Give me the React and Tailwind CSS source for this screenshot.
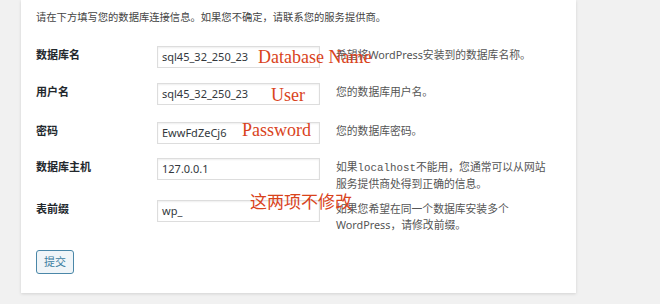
const rows = [
  {
    label: "数据库名",
    value: "sql45_32_250_23",
    rowClass: "h-[37px]",
    desc: <>希望将WordPress安装到的数据库名称。</>,
  },
  {
    label: "用户名",
    value: "sql45_32_250_23",
    rowClass: "h-[39px]",
    desc: <>您的数据库用户名。</>,
  },
  {
    label: "密码",
    value: "EwwFdZeCj6",
    rowClass: "h-[36px]",
    desc: <>您的数据库密码。</>,
  },
  {
    label: "数据库主机",
    value: "127.0.0.1",
    rowClass: "h-[42px]",
    desc: (
      <>
        如果<code className="font-['Liberation_Mono',monospace]">localhost</code>不能用，您通常可以从网站
        <br />
        服务提供商处得到正确的信息。
      </>
    ),
  },
  {
    label: "表前缀",
    value: "wp_",
    rowClass: "h-[50px]",
    desc: (
      <>
        如果您希望在同一个数据库安装多个
        <br />
        WordPress，请修改前缀。
      </>
    ),
  },
];

function App() {
  return (
    <div className="h-[304px] w-[660px] overflow-hidden bg-[#f1f1f1] font-['Noto_Sans','Noto_Sans_CJK_SC',sans-serif] text-[#444]">
      <div className="relative ml-[21px] h-[293px] w-[555px] bg-white px-[15px] shadow-[0_1px_3px_rgba(0,0,0,0.13)]">
        <p className="pt-[9px] text-[10.3px] leading-4">
          请在下方填写您的数据库连接信息。如果您不确定，请联系您的服务提供商。
        </p>

        <div className="mt-[21px]">
          {rows.map((row) => (
            <div key={row.label} className={`flex items-start ${row.rowClass}`}>
              <div className="w-[121px] pt-px text-[11px] font-bold leading-4 text-[#23282d]">{row.label}</div>
              <div className="flex h-[22px] w-[163px] items-center border border-[#ddd] bg-white px-1 text-[11px] text-[#32373c] shadow-[inset_0_1px_2px_rgba(0,0,0,0.07)]">
                {row.value}
              </div>
              <div className="ml-4 pt-px text-[10.8px] leading-4 text-[#555]">{row.desc}</div>
            </div>
          ))}
        </div>

        <button
          type="button"
          className="flex h-6 w-[38px] items-center justify-center rounded-[3px] border border-[#4a87a8] bg-[#f0f5f8] text-[11px] text-[#3a7ca0]"
        >
          提交
        </button>

        <span className="absolute left-[237px] top-[48px] font-['Liberation_Serif',serif] text-[18px] leading-none text-[#d9431c]">
          Database Name
        </span>
        <span className="absolute left-[250px] top-[86px] font-['Liberation_Serif',serif] text-[18px] leading-none text-[#d9431c]">
          User
        </span>
        <span className="absolute left-[221px] top-[121px] font-['Liberation_Serif',serif] text-[18px] leading-none text-[#d9431c]">
          Password
        </span>
        <span className="absolute left-[229px] top-[193px] text-[17px] leading-none text-[#d9431c]">
          这两项不修改
        </span>
      </div>
    </div>
  );
}

export default App;
